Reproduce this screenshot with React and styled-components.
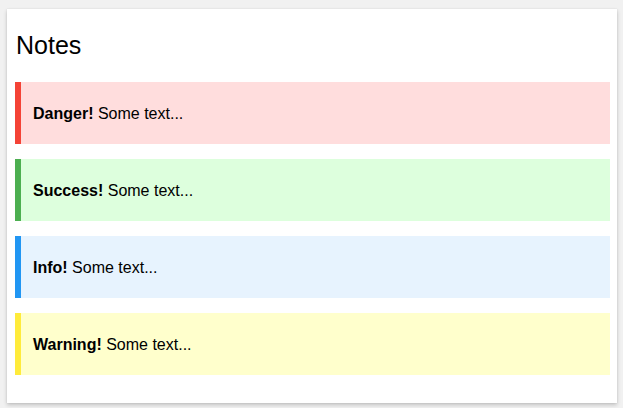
import React from "react"
import styled, { createGlobalStyle } from 'styled-components';

const Global = createGlobalStyle`
  body {
    margin: 0;
    background-color: #f1f1f1;
    font-family: "Liberation Sans", Arial, sans-serif;
    color: #000;
  }
`

const Card = styled.div`
  box-sizing: border-box;
  margin: 9px 0 5px 7px;
  width: 610px;
  padding: 21px 7px 28px 8px;
  background-color: #fff;
  box-shadow: 0 2px 4px rgba(0, 0, 0, 0.2), 0 0 1px rgba(0, 0, 0, 0.12);
`

const Title = styled.h2`
  margin: 0 0 22px 1px;
  font-size: 25px;
  line-height: 30px;
  font-weight: 400;
`

const List = styled.div`
  display: flex;
  flex-direction: column;
  gap: 15px;
`

const tones = {
  danger: { bg: '#ffdddd', line: '#f44336' },
  success: { bg: '#ddffdd', line: '#4caf50' },
  info: { bg: '#e7f3fe', line: '#2196f3' },
  warning: { bg: '#ffffcc', line: '#ffeb3b' },
}

const Note = styled.div`
  display: flex;
  align-items: center;
  height: 62px;
  padding-left: 12px;
  background-color: ${p => tones[p.$tone].bg};
  border-left: 6px solid ${p => tones[p.$tone].line};
  font-size: 16px;
  line-height: 19px;

  strong {
    font-weight: 700;
  }
`

const notes = [
  { tone: 'danger', label: 'Danger!' },
  { tone: 'success', label: 'Success!' },
  { tone: 'info', label: 'Info!' },
  { tone: 'warning', label: 'Warning!' },
]

export default () => (
  <>
    <Global />
    <Card>
      <Title>Notes</Title>
      <List>
        {notes.map(n => (
          <Note key={n.tone} $tone={n.tone}>
            <span><strong>{n.label}</strong> Some text...</span>
          </Note>
        ))}
      </List>
    </Card>
  </>
)
